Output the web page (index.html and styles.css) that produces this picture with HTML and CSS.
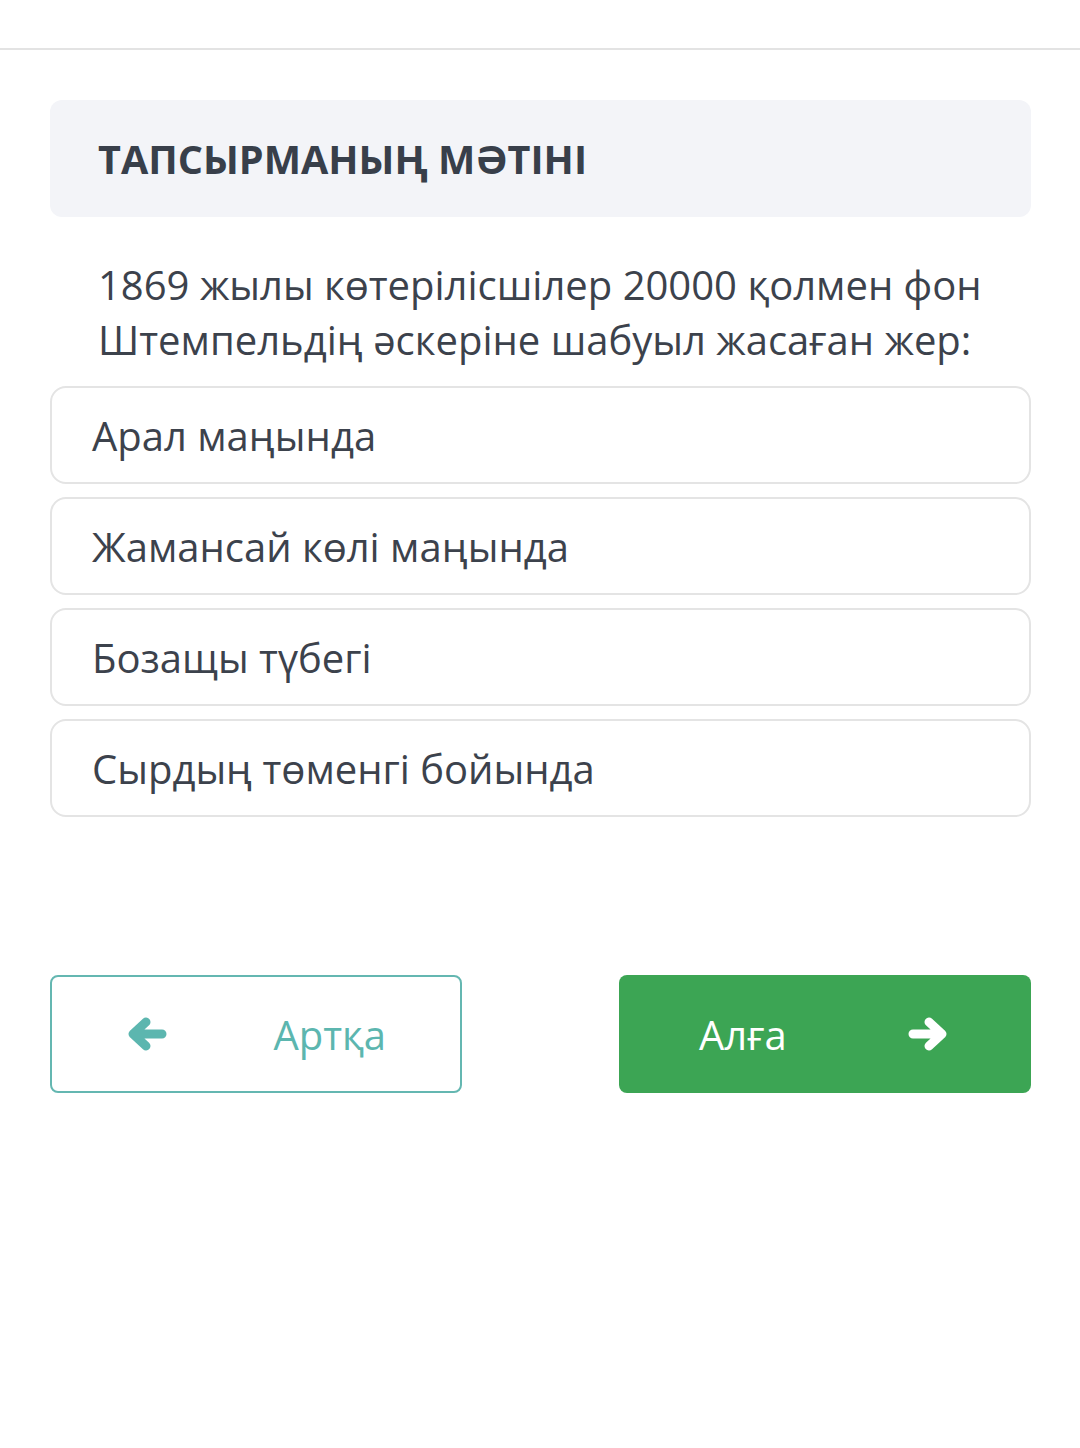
FILE: index.html
```html
<!DOCTYPE html>
<html lang="kk">
<head>
<meta charset="utf-8">
<link rel="stylesheet" href="styles.css">
</head>
<body>
<div class="topbar"></div>
<main class="page">
  <div class="task-head">
    <h1 class="task-title">ТАПСЫРМАНЫҢ МӘТІНІ</h1>
  </div>
  <p class="question">1869 жылы көтерілісшілер 20000 қолмен фон Штемпельдің әскеріне шабуыл жасаған жер:</p>
  <div class="options">
    <div class="option">Арал маңында</div>
    <div class="option">Жамансай көлі маңында</div>
    <div class="option">Бозащы түбегі</div>
    <div class="option">Сырдың төменгі бойында</div>
  </div>
  <div class="nav">
    <button class="btn btn-back">
      <svg class="arrow" viewBox="0 0 40 34" width="40" height="34"><path d="M35 17 H8 M19 5 L6 17 L19 29" fill="none" stroke="currentColor" stroke-width="9" stroke-linecap="round" stroke-linejoin="round"/></svg>
      <span>Артқа</span>
    </button>
    <button class="btn btn-next">
      <span>Алға</span>
      <svg class="arrow" viewBox="0 0 40 34" width="40" height="34"><path d="M5 17 H32 M21 5 L34 17 L21 29" fill="none" stroke="currentColor" stroke-width="9" stroke-linecap="round" stroke-linejoin="round"/></svg>
    </button>
  </div>
</main>
</body>
</html>
```
FILE: styles.css
```css
* { box-sizing: border-box; }
html, body { margin: 0; padding: 0; background: #fff; }
body {
  font-family: "Open Sans", "Noto Sans", "DejaVu Sans", sans-serif;
  color: #3c424c;
  width: 1080px;
  min-height: 1448px;
}
.topbar {
  height: 50px;
  border-bottom: 2px solid #e3e3e3;
}
.page {
  padding: 50px 49px 0 50px;
  display: flex;
  flex-direction: column;
}
.task-head {
  background: #f3f4f8;
  border-radius: 12px;
  height: 117px;
  display: flex;
  align-items: center;
  padding-left: 48px;
}
.task-title {
  margin: 0;
  font-size: 39.6px;
  font-weight: 700;
  color: #383f4a;
}
.question {
  margin: 40px 0 0 0;
  padding-left: 48px;
  font-size: 40px;
  line-height: 55px;
  color: #3c424c;
}
.options {
  margin-top: 19px;
  display: flex;
  flex-direction: column;
  gap: 13px;
}
.option {
  height: 98px;
  border: 2px solid #e4e4e4;
  border-radius: 16px;
  display: flex;
  align-items: center;
  padding-left: 40px;
  font-size: 40px;
  color: #3c424c;
}
.nav {
  margin-top: 158px;
  display: flex;
  justify-content: space-between;
}
.btn {
  width: 412px;
  height: 118px;
  border-radius: 8px;
  display: flex;
  align-items: center;
  justify-content: space-between;
  font-family: inherit;
  font-size: 40px;
  cursor: pointer;
}
.btn-back {
  background: #fff;
  border: 2px solid #64b7b1;
  color: #5cb6af;
  padding: 0 74px 0 75px;
}
.btn-next {
  background: #3ca554;
  border: none;
  color: #fff;
  padding: 0 83px 0 80px;
}
.arrow { display: block; }
```
